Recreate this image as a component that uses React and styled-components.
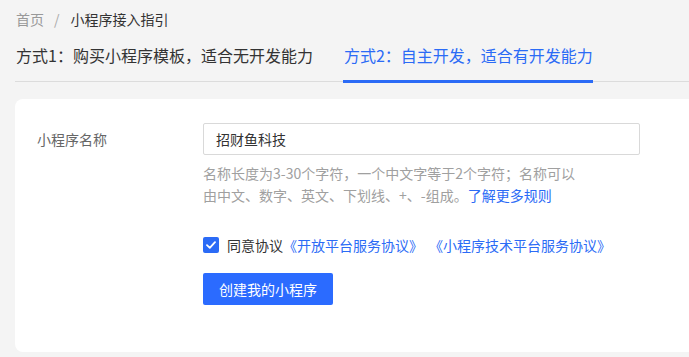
import React from 'react'
import styled, { createGlobalStyle } from 'styled-components'

const GlobalStyle = createGlobalStyle`
    html, body {
        margin:0;
        padding:0;
        background:#f4f4f4;
        font-family:"Noto Sans CJK SC", "Noto Sans", sans-serif;
        color:#333;
    }
    * { box-sizing:border-box; }
`

const App = () => (
    <>
        <GlobalStyle />
        <Page>
            <Breadcrumb>
                <Crumb>首页</Crumb>
                <Separator>/</Separator>
                <Crumb current>小程序接入指引</Crumb>
            </Breadcrumb>
            <Tabs>
                <Tab>方式1：购买小程序模板，适合无开发能力</Tab>
                <Tab active>方式2：自主开发，适合有开发能力</Tab>
            </Tabs>
            <Card>
                <FormRow>
                    <Label>小程序名称</Label>
                    <Field>
                        <Input defaultValue="招财鱼科技" />
                        <Help>
                            名称长度为3-30个字符，一个中文字等于2个字符；名称可以
                            <br />
                            由中文、数字、英文、下划线、+、-组成。<Link>了解更多规则</Link>
                        </Help>
                        <Agree>
                            <Check>
                                <svg width="10" height="8" viewBox="0 0 10 8">
                                    <path d="M1 4.2 L3.8 6.8 L9 1.2" fill="none" stroke="#fff" strokeWidth="1.8" strokeLinecap="round" strokeLinejoin="round" />
                                </svg>
                            </Check>
                            <span>同意协议</span>
                            <Link>《开放平台服务协议》</Link>
                            <Link spaced>《小程序技术平台服务协议》</Link>
                        </Agree>
                        <Button>创建我的小程序</Button>
                    </Field>
                </FormRow>
            </Card>
        </Page>
    </>
)

export default App

const Page = styled.div`
    padding-left:15px;
    height:357px;
    display:flex;
    flex-direction:column;
`

const Breadcrumb = styled.div`
    display:flex;
    align-items:center;
    height:22px;
    margin-top:8px;
    padding-left:1px;
    font-size:14px;
    line-height:22px;
`

const Crumb = styled.span`
    color:${p => p.current ? '#333' : '#999'};
`

const Separator = styled.span`
    color:#aaa;
    margin:0 11px 0 10px;
`

const Tabs = styled.div`
    display:flex;
    margin-top:12px;
    padding-left:1px;
    border-bottom:1px solid #dcdcdc;
    height:40px;
`

const Tab = styled.div`
    font-size:16px;
    line-height:22px;
    padding-top:2px;
    margin-right:31px;
    color:${p => p.active ? '#2b6bf6' : '#333'};
    position:relative;
    &::after {
        content:'';
        display:${p => p.active ? 'block' : 'none'};
        position:absolute;
        left:-1px;
        right:0;
        bottom:-2px;
        height:3px;
        background:#2b6bf6;
    }
`

const Card = styled.div`
    margin-top:17px;
    background:#fff;
    border-radius:8px 0 0 8px;
    height:253px;
    padding:24px 22px;
`

const FormRow = styled.div`
    display:flex;
    align-items:flex-start;
`

const Label = styled.div`
    width:166px;
    font-size:14px;
    line-height:32px;
    color:#666;
`

const Field = styled.div`
    display:flex;
    flex-direction:column;
    align-items:flex-start;
`

const Input = styled.input`
    width:437px;
    height:32px;
    border:1px solid #d9d9d9;
    border-radius:2px;
    padding:0 12px;
    font-family:inherit;
    font-size:14px;
    color:#333;
    outline:none;
`

const Help = styled.div`
    margin-top:7px;
    font-size:14px;
    line-height:22px;
    color:#a0a0a0;
`

const Link = styled.span`
    color:#2b6bf6;
    margin-left:${p => p.spaced ? '6px' : '0'};
`

const Agree = styled.div`
    display:flex;
    align-items:center;
    margin-top:28px;
    font-size:14px;
    line-height:22px;
    color:#333;
`

const Check = styled.span`
    width:16px;
    height:16px;
    border-radius:2px;
    background:#2b6bf6;
    display:inline-flex;
    align-items:center;
    justify-content:center;
    margin-right:8px;
`

const Button = styled.button`
    margin-top:17px;
    height:32px;
    padding:0 16px;
    border:none;
    border-radius:2px;
    background:#2b6bff;
    color:#fff;
    font-family:inherit;
    font-size:14px;
`
